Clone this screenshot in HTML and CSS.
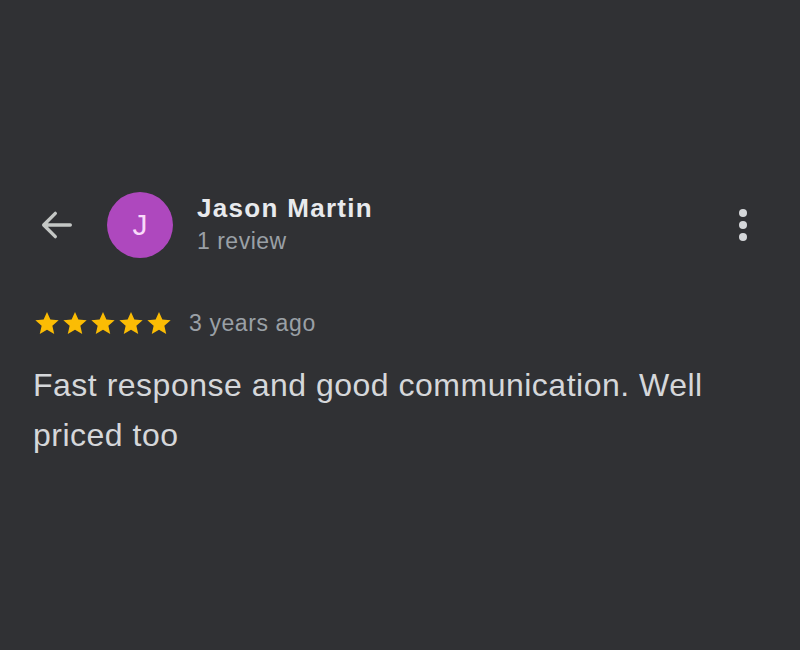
FILE: index.html
```html
<!DOCTYPE html>
<html>
<head>
<meta charset="utf-8">
<link rel="stylesheet" href="styles.css">
</head>
<body>
<div class="review">
  <div class="header">
    <svg class="back" width="36" height="36" viewBox="0 0 24 24"><path d="M20 12H5M11 5l-7 7 7 7" fill="none" stroke="#c4c7c5" stroke-width="2" stroke-linecap="round" stroke-linejoin="round"/></svg>
    <div class="avatar">J</div>
    <div class="who">
      <div class="name">Jason Martin</div>
      <div class="count">1 review</div>
    </div>
    <div class="kebab"><span></span><span></span><span></span></div>
  </div>
  <div class="meta">
    <div class="stars">
      <svg viewBox="0 0 24 24"><path d="M12 2.5l2.9 6.6 7.1.6-5.4 4.7 1.6 7-6.2-3.7-6.2 3.7 1.6-7L2 9.7l7.1-.6z"/></svg>
      <svg viewBox="0 0 24 24"><path d="M12 2.5l2.9 6.6 7.1.6-5.4 4.7 1.6 7-6.2-3.7-6.2 3.7 1.6-7L2 9.7l7.1-.6z"/></svg>
      <svg viewBox="0 0 24 24"><path d="M12 2.5l2.9 6.6 7.1.6-5.4 4.7 1.6 7-6.2-3.7-6.2 3.7 1.6-7L2 9.7l7.1-.6z"/></svg>
      <svg viewBox="0 0 24 24"><path d="M12 2.5l2.9 6.6 7.1.6-5.4 4.7 1.6 7-6.2-3.7-6.2 3.7 1.6-7L2 9.7l7.1-.6z"/></svg>
      <svg viewBox="0 0 24 24"><path d="M12 2.5l2.9 6.6 7.1.6-5.4 4.7 1.6 7-6.2-3.7-6.2 3.7 1.6-7L2 9.7l7.1-.6z"/></svg>
    </div>
    <span class="ago">3 years ago</span>
  </div>
  <p class="text">Fast response and good communication. Well priced too</p>
</div>
</body>
</html>
```
FILE: styles.css
```css
html, body {
  margin: 0;
  padding: 0;
  background: #303134;
  height: 100%;
}
body {
  font-family: "Liberation Sans", Arial, sans-serif;
  color: #e8eaed;
}
.review {
  padding: 192px 33px 0 33px;
}
.header {
  display: flex;
  align-items: center;
  height: 66px;
}
.back {
  margin-left: 4px;
  width: 40px;
  height: 40px;
}
.avatar {
  margin-left: 30px;
  width: 66px;
  height: 66px;
  border-radius: 50%;
  background: #ae48be;
  color: #f8dafa;
  display: flex;
  align-items: center;
  justify-content: center;
  font-size: 30px;
}
.who {
  margin-left: 24px;
  flex: 1;
  display: flex;
  flex-direction: column;
  margin-top: 0;
}
.name {
  font-size: 26px;
  font-weight: bold;
  line-height: 32px;
  letter-spacing: 1.3px;
}
.count {
  font-size: 23px;
  color: #9aa0a6;
  line-height: 34px;
  letter-spacing: 0.5px;
}
.kebab {
  display: flex;
  flex-direction: column;
  gap: 4px;
  margin-right: 20px;
}
.kebab span {
  width: 8px;
  height: 8px;
  border-radius: 50%;
  background: #d5d7da;
}
.meta {
  display: flex;
  align-items: center;
  margin-top: 50px;
  height: 30px;
}
.stars {
  display: flex;
}
.stars svg {
  width: 28px;
  height: 28px;
  fill: #fbbc04;
}
.ago {
  margin-left: 16px;
  font-size: 23px;
  color: #9aa0a6;
  letter-spacing: 0.6px;
}
.text {
  margin: 22px 0 0 0;
  font-size: 32px;
  line-height: 50px;
  color: #d5d7da;
  letter-spacing: 0.5px;
  width: 700px;
}
```
